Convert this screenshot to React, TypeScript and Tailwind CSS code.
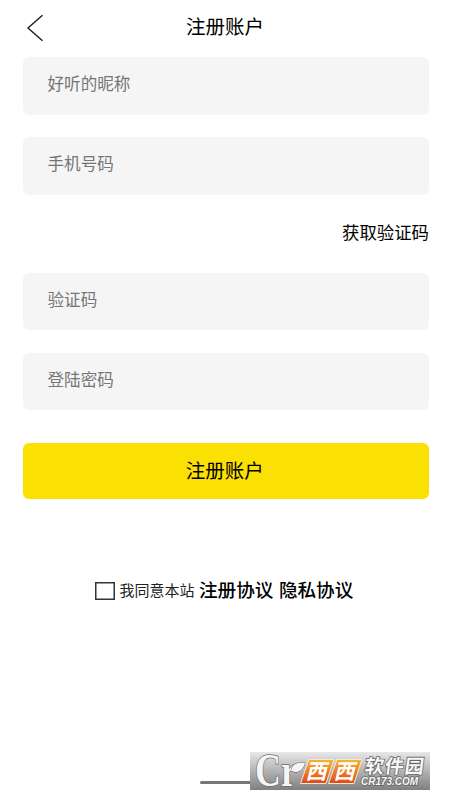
import React, { useState } from 'react';

const App: React.FC = () => {
  const [agreed, setAgreed] = useState(false);

  return (
    <div className="relative w-[450px] h-[800px] bg-white text-black overflow-hidden flex flex-col font-['Noto_Sans_CJK_SC',sans-serif]">
      {/* Header */}
      <header className="h-[57px] shrink-0 grid grid-cols-[60px_1fr_60px] items-start">
        <button className="pl-[26px] pt-[14px]" aria-label="back">
          <svg width="18" height="28" viewBox="0 0 18 28" fill="none" stroke="#1c1c1c" strokeWidth="1.4">
            <path d="M16.5 1.2 L2 14 L16.5 26.8" />
          </svg>
        </button>
        <h1 className="pt-[12px] text-center text-[19.5px] leading-[28px]">注册账户</h1>
      </header>

      {/* Form */}
      <main className="pl-[22.5px] pr-[21px] flex flex-col">
        <Field label="好听的昵称" />
        <div className="h-[22.5px]" />
        <Field label="手机号码" />
        <div className="h-[78px] flex items-center justify-end">
          <button className="text-[17.4px] leading-[24px] pb-[4px]">获取验证码</button>
        </div>
        <Field label="验证码" />
        <div className="h-[22.5px]" />
        <Field label="登陆密码" />

        <button className="mt-[33px] h-[56px] rounded-[6px] bg-[#fbe003] text-[19.5px] leading-[28px] pr-[2px] pb-[3px]">
          注册账户
        </button>
      </main>

      {/* Agreement */}
      <div className="mt-[76px] pl-[95px] h-[30px] flex items-center">
        <button
          onClick={() => setAgreed(!agreed)}
          className={`w-[20px] h-[18px] mt-[1px] border border-[#333] shadow-[inset_0_0_0_0.5px_#333] ${agreed ? 'bg-[#fbe003]' : 'bg-white'}`}
          aria-label="agree"
        />
        <span className="ml-[4.5px] pb-[1px] text-[15px] leading-[22px] text-[#222]">我同意本站</span>
        <a className="ml-[4.5px] pb-[3px] text-[18.6px] leading-[26px] font-medium">注册协议</a>
        <a className="ml-[5.5px] pb-[3px] text-[18.6px] leading-[26px] font-medium">隐私协议</a>
      </div>

      {/* Home indicator */}
      <div className="mt-auto mb-[16px] ml-[200px] w-[54px] h-[3px] rounded-full bg-[#777]" />

      <Watermark />
    </div>
  );
};

const Field: React.FC<{ label: string }> = ({ label }) => (
  <input
    placeholder={label}
    className="block w-full h-[57.5px] shrink-0 rounded-[6px] bg-[#f5f5f5] px-[25px] pb-[5px] text-[16.6px] text-black placeholder:text-[#757575] outline-none"
  />
);

const Watermark: React.FC = () => (
  <div className="absolute left-[250px] top-[752px] w-[180px] h-[38px] bg-linear-to-b from-[#e8e8e8] to-[#808080]">
    <svg className="overflow-visible" width="180" height="38" viewBox="0 0 180 38">
      <defs>
        <linearGradient id="orange" x1="0" y1="0" x2="0" y2="1">
          <stop offset="0" stopColor="#f9b52b" />
          <stop offset="1" stopColor="#e2481c" />
        </linearGradient>
      </defs>
      {/* Cr mark with a leaf on the r */}
      <g fill="#f5f5f5" stroke="#6b6b6b" strokeWidth="1.6" paintOrder="stroke" fontFamily="Liberation Serif, serif" fontWeight="700">
        <text x="5" y="34" fontSize="47" textLength="42" lengthAdjust="spacingAndGlyphs">Cr</text>
        <path d="M41 19 C43 11 48 10 55 11 C53 18 48 22 42 19 Z" strokeWidth="1" />
      </g>
      <g fill="url(#orange)" stroke="#f3ead8" strokeWidth="1">
        <path d="M59 7.5 H84 L76 31.5 H50.5 Z" />
        <path d="M87 7.5 H112 L104 31.5 H78.5 Z" />
      </g>
      <g fill="#fff" fontFamily="Noto Sans CJK SC, sans-serif" fontWeight="700" fontSize="21">
        <text transform="translate(55.5 27) skewX(-14)">西</text>
        <text transform="translate(83.5 27) skewX(-14)">西</text>
      </g>
      <g fill="#f8f8f8" stroke="#666" strokeWidth="1.6" paintOrder="stroke">
        <text transform="translate(114 20.5) skewX(-8)" fontFamily="Noto Sans CJK SC, sans-serif" fontWeight="700" fontSize="19" textLength="59">软件园</text>
        <text transform="translate(111 32.5)" fontFamily="Liberation Sans, sans-serif" fontStyle="italic" fontWeight="700" fontSize="10" textLength="57" lengthAdjust="spacingAndGlyphs">CR173.COM</text>
      </g>
    </svg>
  </div>
);

export default App;
